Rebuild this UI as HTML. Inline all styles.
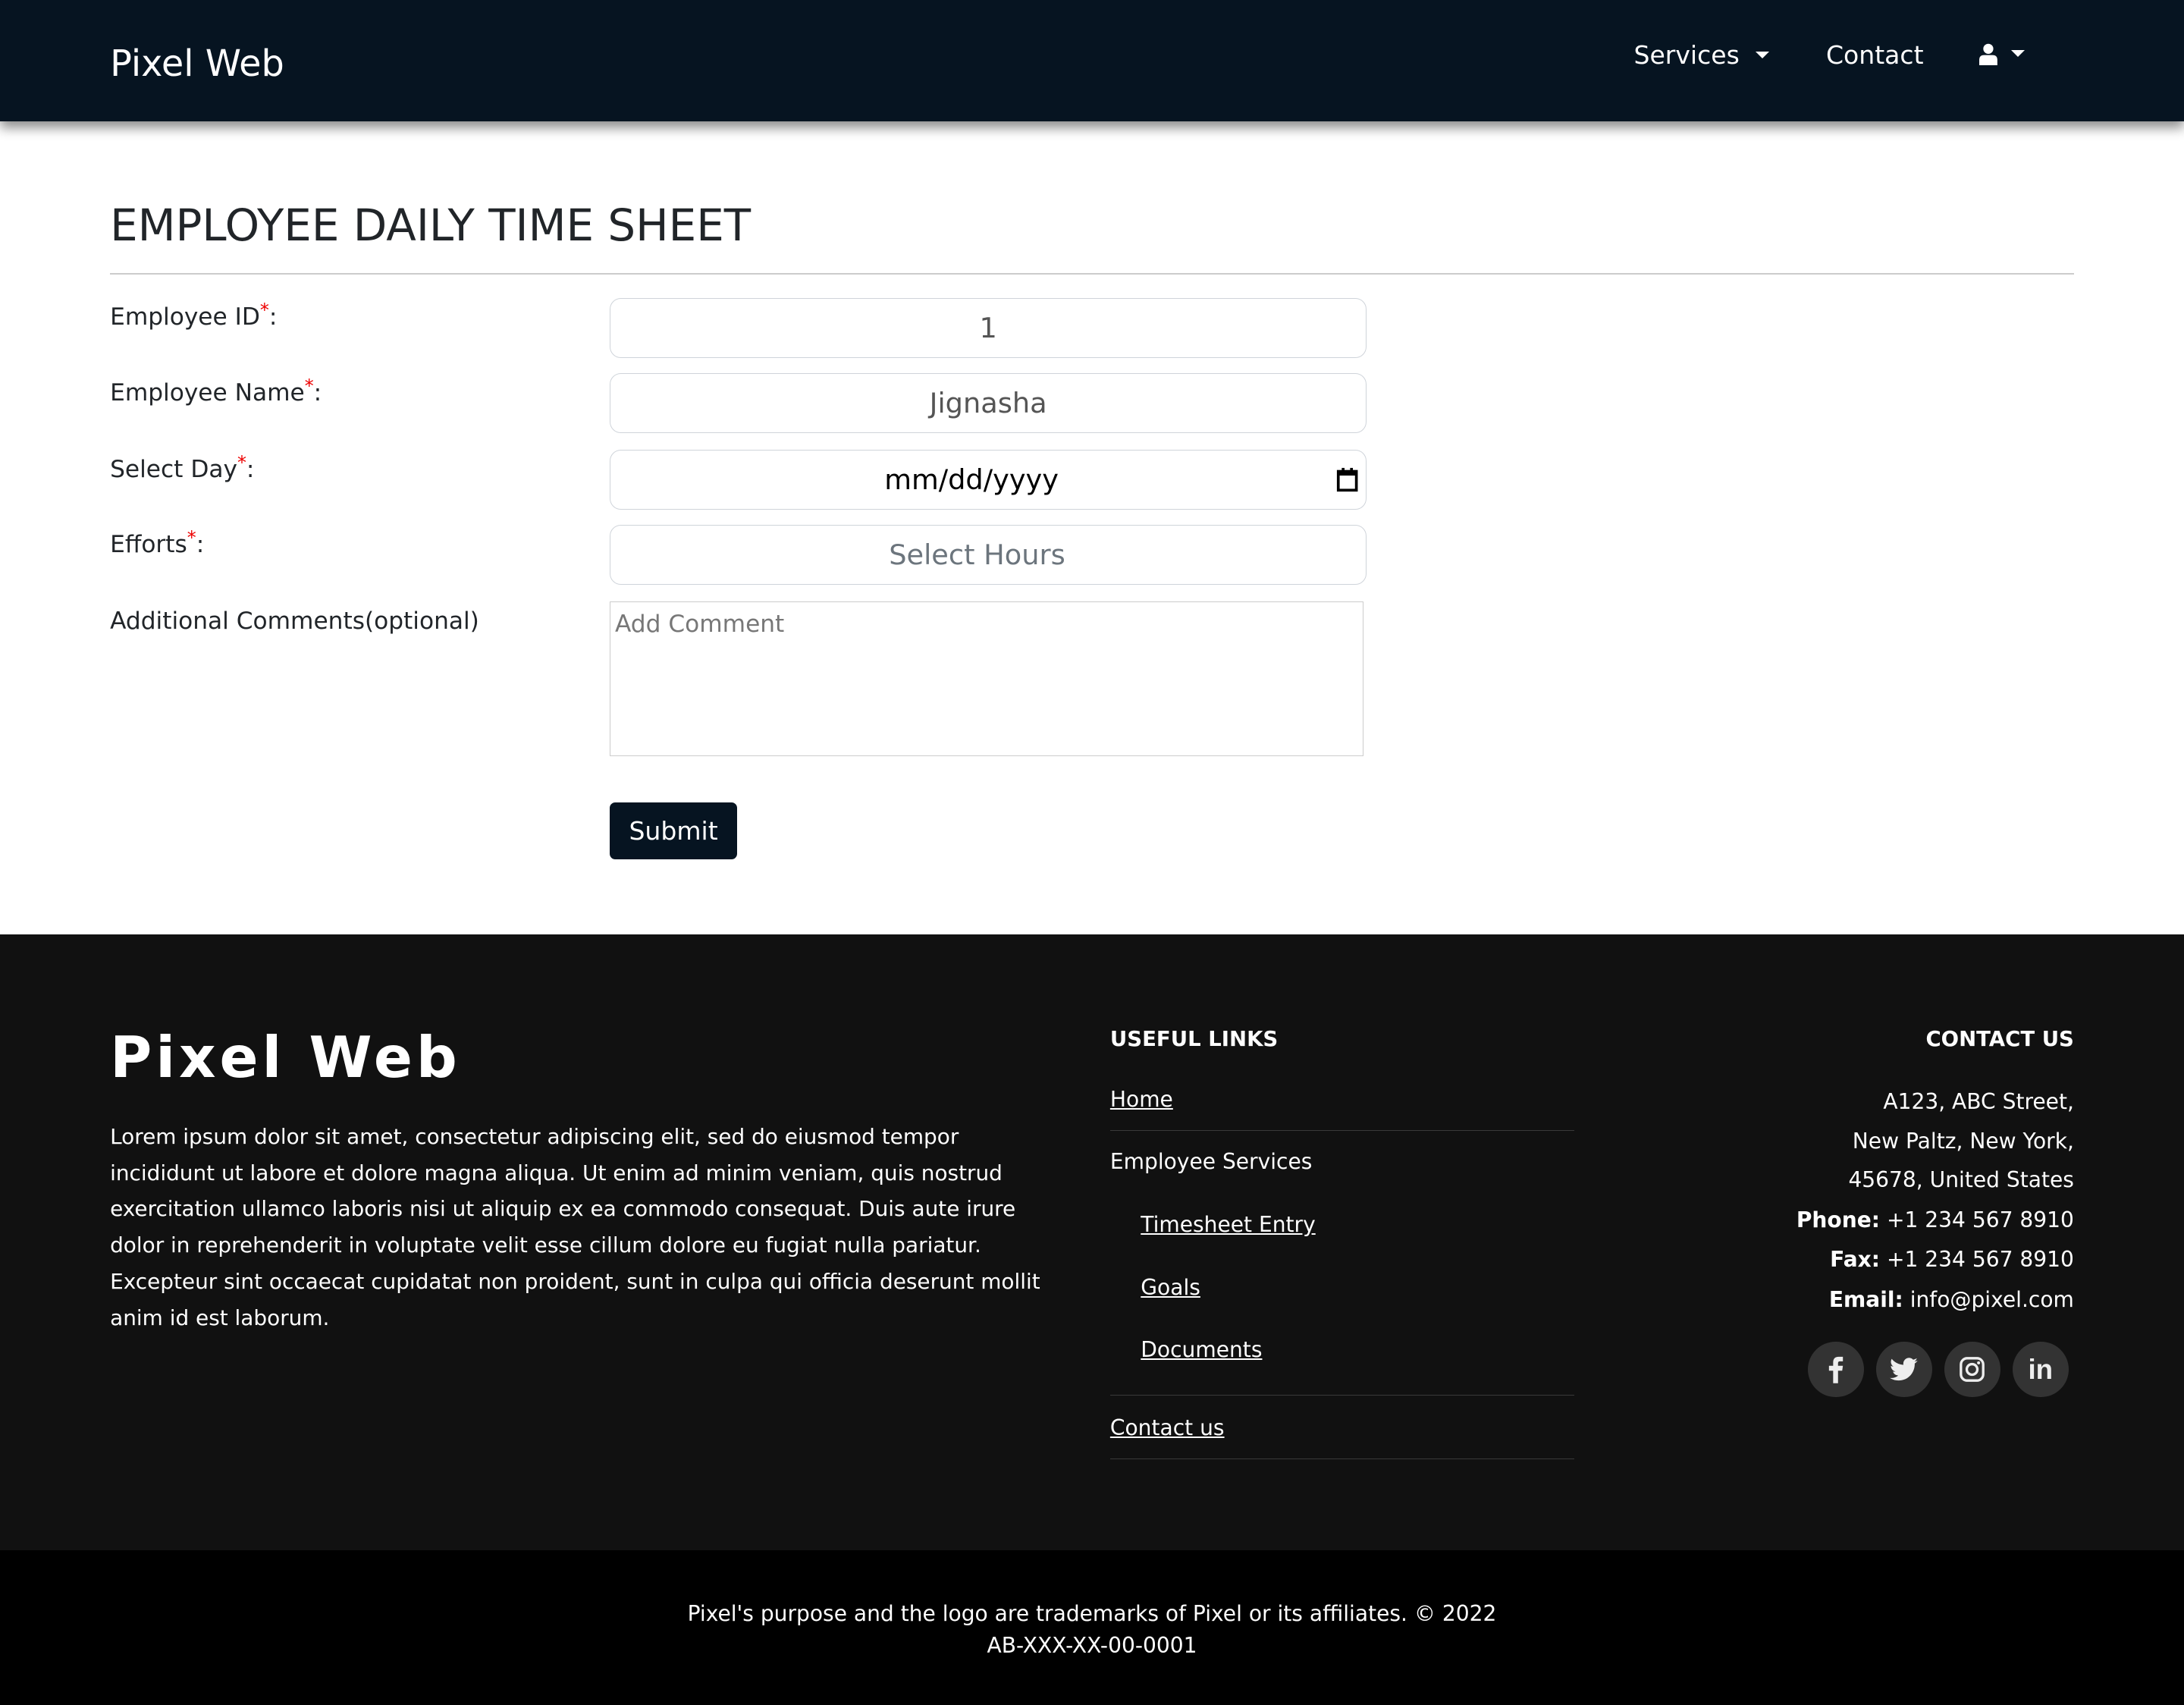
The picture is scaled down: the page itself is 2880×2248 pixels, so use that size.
<!DOCTYPE html>
<html><head><meta charset="utf-8"><style>
html{zoom:1.836735}
body{margin:0;width:1568px;height:1224px;position:relative;overflow:hidden;font-family:"DejaVu Sans","Liberation Sans",sans-serif;background:#fff;color:#212529}
.a{position:absolute;white-space:nowrap}
.nav{position:absolute;left:0;top:0;width:1568px;height:87px;background:#061421;box-shadow:0 5px 8px rgba(0,0,0,.45)}
.lbl{position:absolute;left:79px;font-size:17px;line-height:20px}
.lbl sup{color:#e00;font-size:13px;vertical-align:6px;line-height:0}
.inp{position:absolute;left:438px;width:543px;height:43px;border:1px solid #cfd4da;border-radius:8px;box-sizing:border-box;text-align:center;font-size:20px;line-height:43px}
.f{position:absolute;left:0;top:671px;width:1568px;height:442px;background:#111}
.w{color:#fff}
.ul{position:absolute;left:797px;width:333px;border-top:1px solid #3a3a3a}
.lk{text-decoration:underline;font-size:15.3px;color:#fff}
.rt{position:absolute;right:79px;text-align:right;font-size:15.3px;color:#fff;white-space:nowrap}
.ic{position:absolute;top:963px;width:40px;height:40px;border-radius:50%;background:#333;display:flex;align-items:center;justify-content:center}
</style></head><body>
<div class="nav">
<div class="a w" style="left:79px;top:31px;font-size:26px">Pixel Web</div>
<div class="a w" style="left:1173px;top:29px;font-size:18px">Services <span style="display:inline-block;width:0;height:0;border-left:5px solid transparent;border-right:5px solid transparent;border-top:5px solid #fff;vertical-align:4px;margin-left:6px"></span></div>
<div class="a w" style="left:1311px;top:29px;font-size:18px">Contact</div>
<svg class="a" style="left:1421px;top:31px" width="13" height="16" viewBox="0 0 13 16"><circle cx="6.5" cy="4" r="3.6" fill="#fff"/><path d="M0 16V12Q0 8.5 3.5 8.5H9.5Q13 8.5 13 12V16Z" fill="#fff"/></svg>
<span class="a" style="left:1444px;top:36px;width:0;height:0;border-left:5px solid transparent;border-right:5px solid transparent;border-top:5px solid #fff"></span>
</div>
<div class="a" style="left:79px;top:143px;font-size:31.5px;color:#212529">EMPLOYEE DAILY TIME SHEET</div>
<div class="a" style="left:79px;top:196px;width:1410px;height:1px;background:#ccc"></div>
<div class="lbl" style="top:218px">Employee ID<sup>*</sup>:</div>
<div class="lbl" style="top:272px">Employee Name<sup>*</sup>:</div>
<div class="lbl" style="top:327px">Select Day<sup>*</sup>:</div>
<div class="lbl" style="top:381px">Efforts<sup>*</sup>:</div>
<div class="lbl" style="top:436px">Additional Comments(optional)</div>
<div class="inp" style="top:214px;color:#555">1</div>
<div class="inp" style="top:268px;color:#555">Jignasha</div>
<div class="inp" style="top:323px;color:#000;padding-right:24px">mm/dd/yyyy
<svg style="position:absolute;right:5px;top:12px" width="16" height="18" viewBox="0 0 16 18"><rect x="1.5" y="3" width="13" height="13.5" fill="none" stroke="#000" stroke-width="2"/><rect x="1.5" y="3" width="13" height="3" fill="#000"/><rect x="4" y="0.5" width="2" height="3" fill="#000"/><rect x="10" y="0.5" width="2" height="3" fill="#000"/></svg></div>
<div class="inp" style="top:377px;color:#6c757d;padding-right:16px">Select Hours</div>
<div class="a" style="left:438px;top:432px;width:541px;height:111px;border:1px solid #ccc;box-sizing:border-box;font-size:17px;color:#777;padding:6px 3px">Add Comment</div>
<div class="a w" style="left:438px;top:576px;width:91px;height:41px;background:#061421;border-radius:4px;text-align:center;line-height:41px;font-size:18px">Submit</div>

<div class="f"></div>
<div class="a w" style="left:79px;top:735px;font-size:41px;font-weight:bold;letter-spacing:2.7px">Pixel Web</div>
<div class="a w" style="left:79px;top:803px;width:672px;font-size:15.2px;line-height:26px;white-space:normal">Lorem ipsum dolor sit amet, consectetur adipiscing elit, sed do eiusmod tempor incididunt ut labore et dolore magna aliqua. Ut enim ad minim veniam, quis nostrud exercitation ullamco laboris nisi ut aliquip ex ea commodo consequat. Duis aute irure dolor in reprehenderit in voluptate velit esse cillum dolore eu fugiat nulla pariatur. Excepteur sint occaecat cupidatat non proident, sunt in culpa qui officia deserunt mollit anim id est laborum.</div>
<div class="a w" style="left:797px;top:737px;font-size:15px;font-weight:bold">USEFUL LINKS</div>
<div class="a lk" style="left:797px;top:780px">Home</div>
<div class="ul" style="top:811px"></div>
<div class="a w" style="left:797px;top:825px;font-size:15.3px">Employee Services</div>
<div class="a lk" style="left:819px;top:870px">Timesheet Entry</div>
<div class="a lk" style="left:819px;top:915px">Goals</div>
<div class="a lk" style="left:819px;top:960px">Documents</div>
<div class="ul" style="top:1001px"></div>
<div class="a lk" style="left:797px;top:1016px">Contact us</div>
<div class="ul" style="top:1047px"></div>
<div class="rt" style="top:737px;font-size:15px;font-weight:bold">CONTACT US</div>
<div class="rt" style="top:782px">A123, ABC Street,</div>
<div class="rt" style="top:810px">New Paltz, New York,</div>
<div class="rt" style="top:838px">45678, United States</div>
<div class="rt" style="top:867px"><b>Phone:</b> +1 234 567 8910</div>
<div class="rt" style="top:895px"><b>Fax:</b> +1 234 567 8910</div>
<div class="rt" style="top:924px"><b>Email:</b> info@pixel.com</div>
<div class="ic" style="left:1298px"><svg width="12" height="20" viewBox="0 0 12 20"><path d="M4 20V11H1V7.5H4V5Q4 1 8 1H11V4.3H8.8Q7.5 4.3 7.5 5.6V7.5H11L10.5 11H7.5V20Z" fill="#eee"/></svg></div>
<div class="ic" style="left:1347px"><svg width="20" height="17" viewBox="0 0 24 20"><path d="M24 2.4a10 10 0 0 1-2.8.8A4.9 4.9 0 0 0 23.3.4a9.8 9.8 0 0 1-3.1 1.2A4.9 4.9 0 0 0 11.8 6 14 14 0 0 1 1.7.9a4.9 4.9 0 0 0 1.5 6.6A4.9 4.9 0 0 1 1 6.9a4.9 4.9 0 0 0 3.9 4.8 4.9 4.9 0 0 1-2.2.1 4.9 4.9 0 0 0 4.6 3.4A9.9 9.9 0 0 1 0 17.3 14 14 0 0 0 7.5 19.5c9.1 0 14-7.5 14-14v-.6A10 10 0 0 0 24 2.4z" fill="#eee"/></svg></div>
<div class="ic" style="left:1396px"><svg width="18" height="18" viewBox="0 0 18 18"><rect x="1" y="1" width="16" height="16" rx="4.5" fill="none" stroke="#eee" stroke-width="1.8"/><circle cx="9" cy="9" r="3.8" fill="none" stroke="#eee" stroke-width="1.8"/><circle cx="13.7" cy="4.3" r="1.1" fill="#eee"/></svg></div>
<div class="ic" style="left:1445px"><span style="color:#eee;font-weight:bold;font-size:20px;font-family:'Liberation Sans',sans-serif">in</span></div>
<div class="a" style="left:0;top:1113px;width:1568px;height:111px;background:#000"></div>
<div class="a w" style="left:0;top:1147px;width:1568px;text-align:center;font-size:15.3px;line-height:23px">Pixel's purpose and the logo are trademarks of Pixel or its affiliates. © 2022<br>AB-XXX-XX-00-0001</div>
</body></html>
